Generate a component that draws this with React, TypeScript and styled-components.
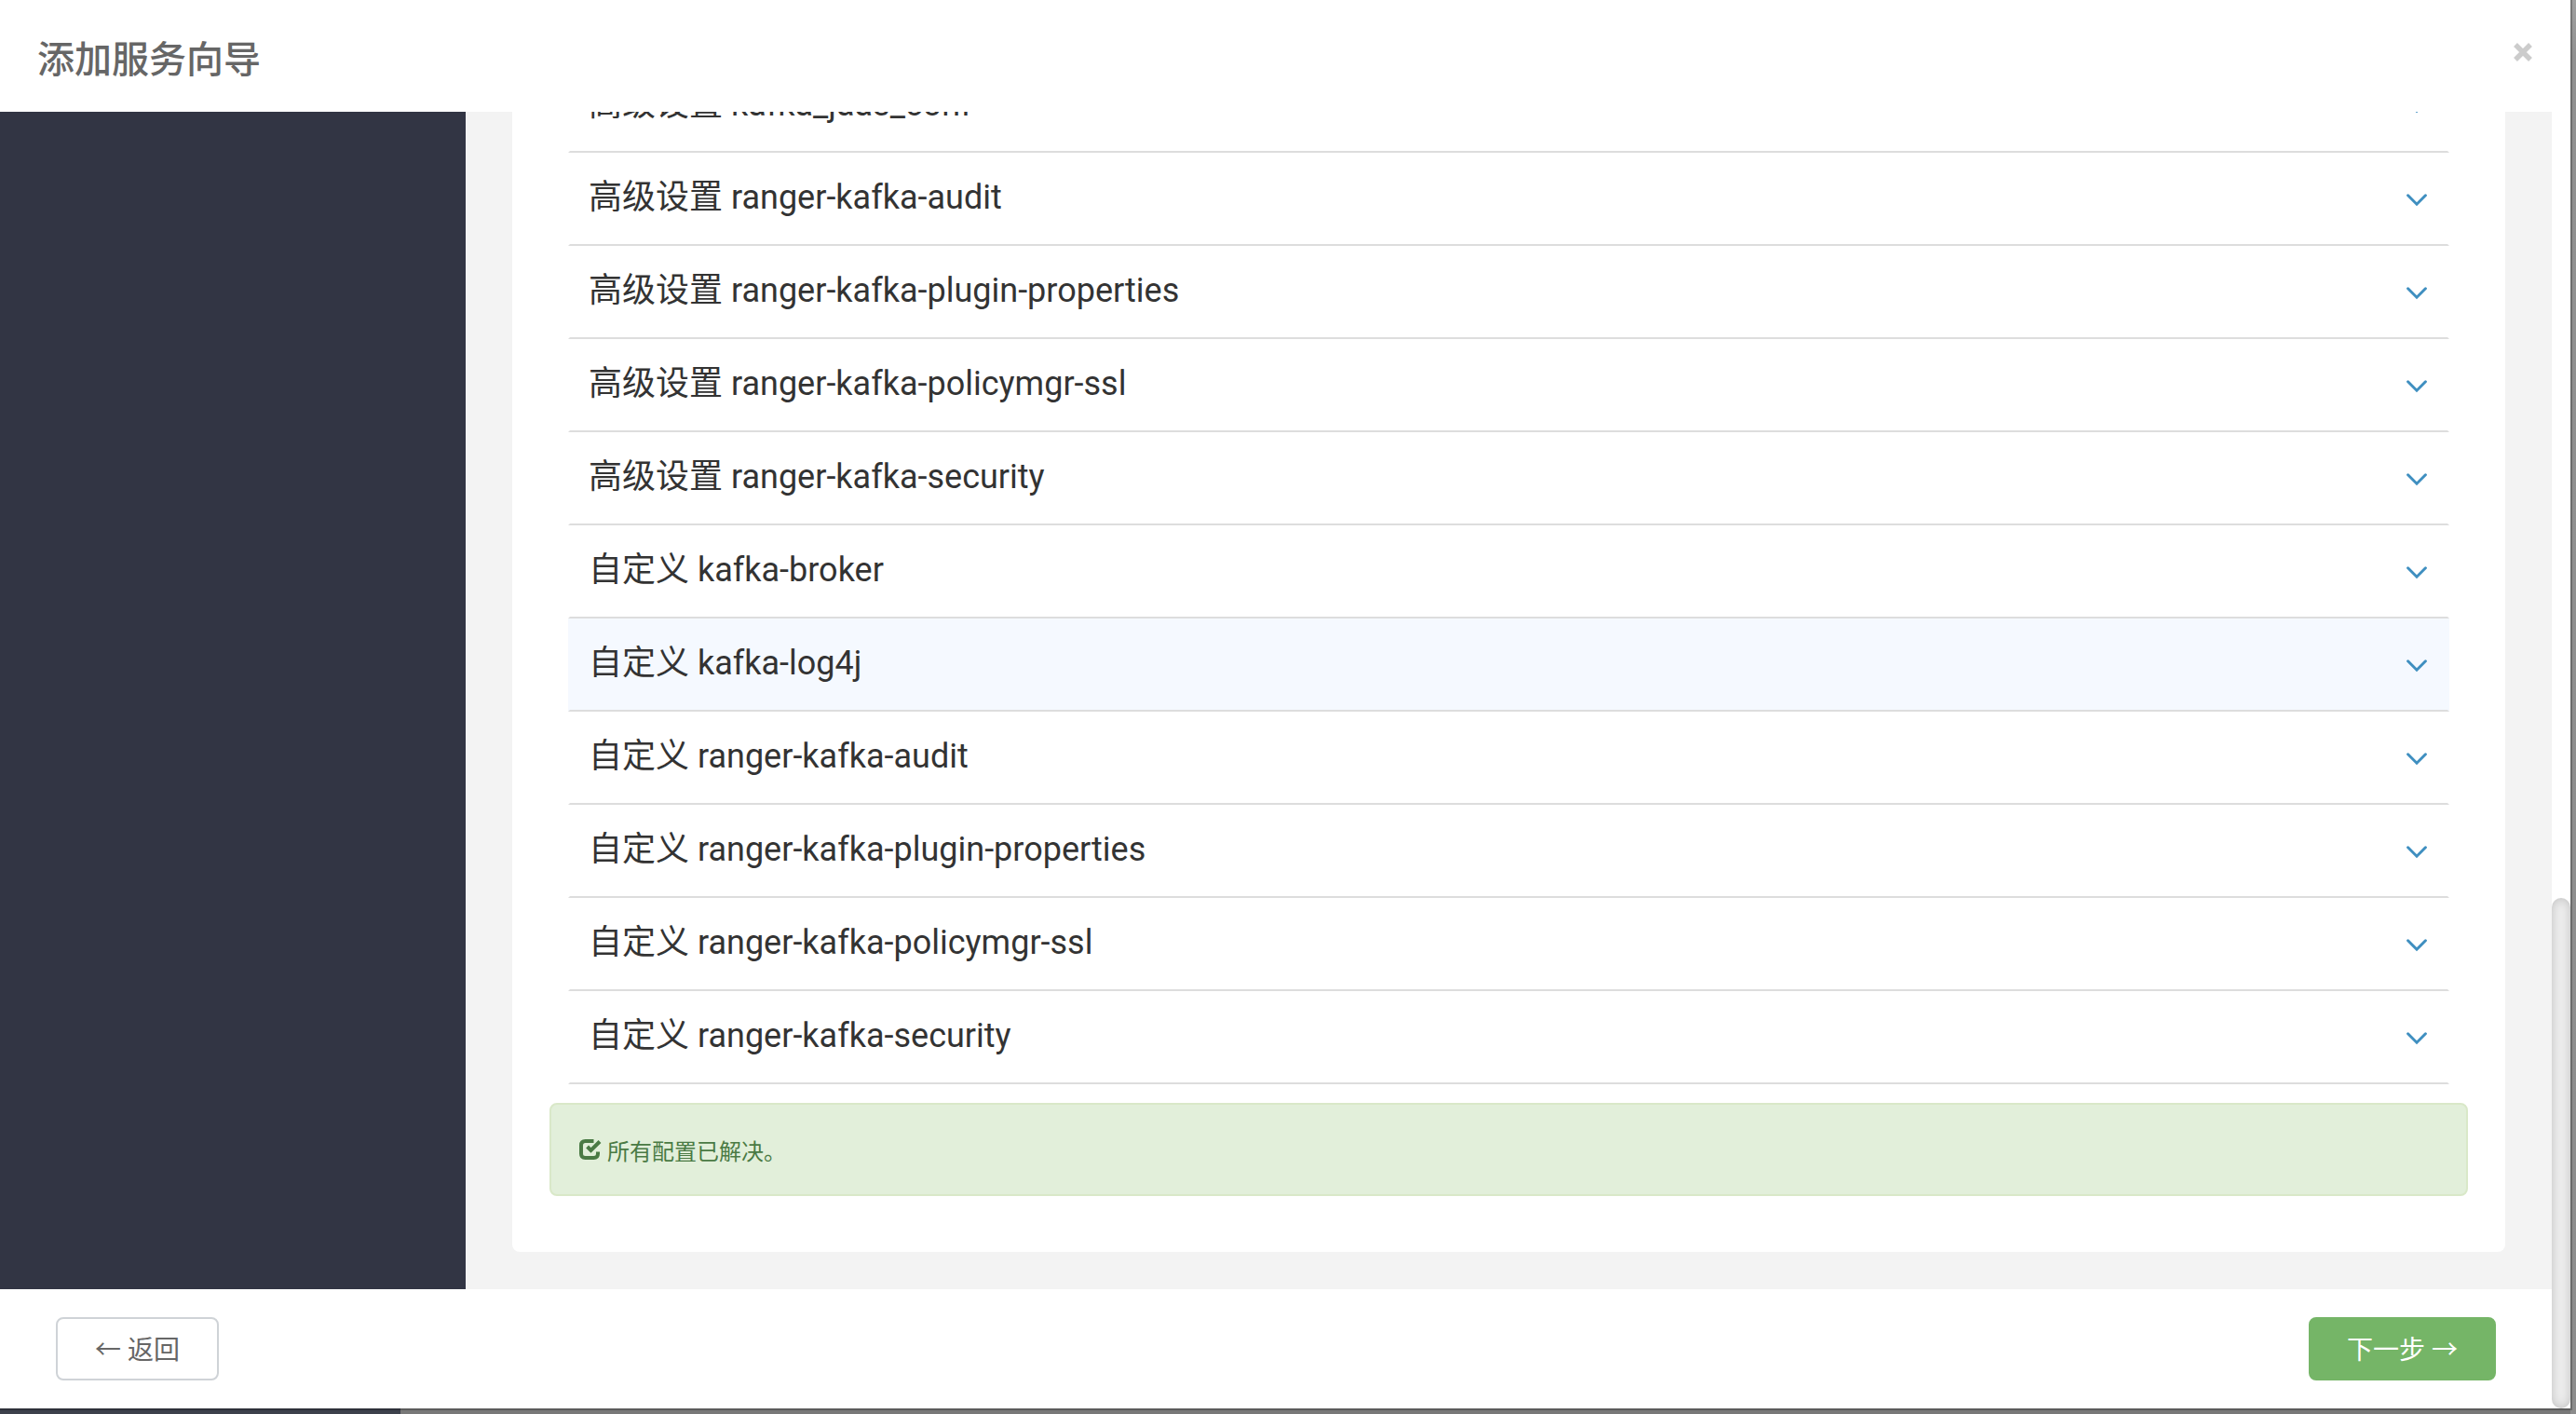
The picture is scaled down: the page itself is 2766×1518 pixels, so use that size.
import React from 'react';
import styled, { createGlobalStyle } from 'styled-components';

const GlobalStyle = createGlobalStyle`
  *, *::before, *::after { box-sizing: border-box; }
  body {
    margin: 0;
    overflow: hidden;
    font-family: Roboto, 'Noto Sans CJK SC', sans-serif;
  }
`;

const Backdrop = styled.div`
  height: 100vh;
  padding: 0 6px 6px 0;
  background:
    linear-gradient(to right, #3d414b 430px, #787878 430px) left bottom / calc(100% - 6px) 6px no-repeat,
    linear-gradient(#a0a0a0, #919191 60px, #8c8c8c);
`;

const Modal = styled.div`
  display: flex;
  height: 100%;
  background: #fff;
  box-shadow: 0 0 0 2px rgba(0, 0, 0, 0.24);
`;

const Dialog = styled.div`
  flex: 1;
  min-width: 0;
  display: flex;
  flex-direction: column;
`;

const Header = styled.header`
  display: flex;
  justify-content: space-between;
  align-items: flex-start;
  height: 120px;
  padding: 35px 20px 0 40px;
`;

const Title = styled.h4`
  margin: 0;
  font-size: 40px;
  line-height: 60px;
  font-weight: 500;
  color: #666;
`;

const CloseButton = styled.button`
  display: flex;
  padding: 10px 0;
  border: 0;
  background: none;
  color: #ccc;
  cursor: pointer;
`;

const Body = styled.div`
  flex: 1;
  min-height: 0;
  display: flex;
  background: #f3f3f3;
`;

const Sidebar = styled.aside`
  flex: 0 0 500px;
  background: #323544;
`;

const Content = styled.main`
  flex: 1;
  min-width: 0;
  display: flex;
  flex-direction: column;
  justify-content: flex-end;
  overflow: hidden;
  padding: 0 50px 40px;
`;

const Card = styled.section`
  padding: 60px 40px;
  border-radius: 8px;
  background: #fff;
`;

const Accordion = styled.div`
  padding: 0 20px;
  margin-bottom: 20px;
`;

const PanelHeading = styled.button<{ $active?: boolean }>`
  display: flex;
  justify-content: space-between;
  align-items: center;
  width: 100%;
  height: 100px;
  padding: 0 22px 2px 20px;
  border: 2px solid transparent;
  border-top: 0;
  border-bottom-color: #ddd;
  background: ${({ $active }) => ($active ? '#f5f9ff' : '#fff')};
  font-family: inherit;
  font-size: 36px;
  line-height: 40px;
  color: #333;
  text-align: left;
  cursor: pointer;
`;

const Chevron = styled.svg`
  display: block;
  margin-top: 6px;
`;

const Alert = styled.div`
  display: flex;
  align-items: center;
  gap: 6px;
  height: 100px;
  padding: 0 30px;
  border: 2px solid #d9e8c8;
  border-radius: 8px;
  background: #e2efda;
  font-size: 24px;
  color: #4a7a44;
`;

const Footer = styled.footer`
  display: flex;
  justify-content: space-between;
  align-items: center;
  padding: 30px 60px;
`;

const FooterButton = styled.button<{ $primary?: boolean }>`
  height: 68px;
  padding: 4px ${({ $primary }) => ($primary ? 39 : 40)}px 0;
  border: 2px solid ${({ $primary }) => ($primary ? '#75b567' : '#cfd3d7')};
  border-radius: 8px;
  background: ${({ $primary }) => ($primary ? '#75b567' : '#fff')};
  color: ${({ $primary }) => ($primary ? '#fff' : '#666')};
  font-family: inherit;
  font-size: 28px;
  line-height: 40px;
  cursor: pointer;
`;

const ScrollTrack = styled.div`
  flex: 0 0 20px;
  display: flex;
  flex-direction: column;
  justify-content: flex-end;
`;

const ScrollThumb = styled.div`
  height: 548px;
  border-radius: 10px;
  background: #eee;
  box-shadow: inset 0 0 12px rgba(0, 0, 0, 0.2);
`;

const panels = [
  '高级设置 kafka_jaas_conf',
  '高级设置 ranger-kafka-audit',
  '高级设置 ranger-kafka-plugin-properties',
  '高级设置 ranger-kafka-policymgr-ssl',
  '高级设置 ranger-kafka-security',
  '自定义 kafka-broker',
  '自定义 kafka-log4j',
  '自定义 ranger-kafka-audit',
  '自定义 ranger-kafka-plugin-properties',
  '自定义 ranger-kafka-policymgr-ssl',
  '自定义 ranger-kafka-security',
];

const ACTIVE_PANEL = '自定义 kafka-log4j';

export default function App() {
  return (
    <>
      <GlobalStyle />
      <Backdrop>
        <Modal role="dialog" aria-labelledby="wizard-title">
          <Dialog>
            <Header>
              <Title id="wizard-title">添加服务向导</Title>
              <CloseButton aria-label="关闭">
                <svg width="22" height="22" viewBox="0 0 22 22" stroke="currentColor" strokeWidth="5.4">
                  <path d="M3 3 19 19M19 3 3 19" />
                </svg>
              </CloseButton>
            </Header>
            <Body>
              <Sidebar />
              <Content>
                <Card>
                  <Accordion>
                    {panels.map((name) => (
                      <PanelHeading key={name} $active={name === ACTIVE_PANEL}>
                        <span>{name}</span>
                        <Chevron width="22" height="14" viewBox="0 0 22 14" fill="none" stroke="#3f8fc0" strokeWidth="3" strokeLinecap="round">
                          <path d="M1.6 1.8 11 11.2 20.4 1.8" />
                        </Chevron>
                      </PanelHeading>
                    ))}
                  </Accordion>
                  <Alert role="status">
                    <svg width="24" height="24" viewBox="0 0 24 24" fill="none" stroke="currentColor" strokeWidth="4">
                      <path d="M15.500 3H6.500Q2 3 2 7.500V16.500Q2 21 6.500 21H15.500Q20 21 20 16.500V14.500" />
                      <path d="M8.600 9 12.500 13 22 3.500" />
                    </svg>
                    <span>所有配置已解决。</span>
                  </Alert>
                </Card>
              </Content>
            </Body>
            <Footer>
              <FooterButton>← 返回</FooterButton>
              <FooterButton $primary>下一步 →</FooterButton>
            </Footer>
          </Dialog>
          <ScrollTrack>
            <ScrollThumb />
          </ScrollTrack>
        </Modal>
      </Backdrop>
    </>
  );
}
